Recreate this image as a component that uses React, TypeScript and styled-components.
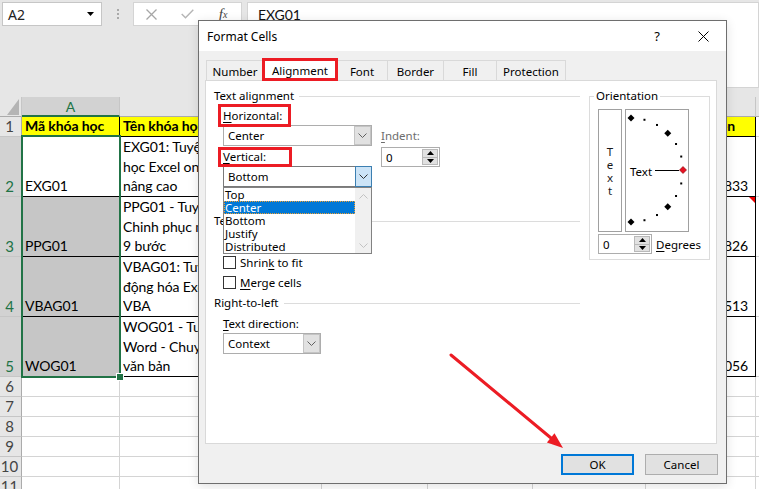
import React from "react";
import styled, { createGlobalStyle } from "styled-components";

const CELL = `"Lato", "Liberation Sans", sans-serif`;
const UI = `"Noto Sans", "Liberation Sans", sans-serif`;
const RED = "#ec1c24";

const Global = createGlobalStyle`
  html, body { margin: 0; padding: 0; background: #fff; }
  body { width: 759px; height: 489px; overflow: hidden; }
  *, *::before, *::after { box-sizing: border-box; }
  u { text-decoration: underline; text-underline-offset: 2px; }
`;

const Screen = styled.div`
  position: relative;
  width: 759px;
  height: 489px;
  overflow: hidden;
  display: flex;
  flex-direction: column;
  background: #e6e6e6;
`;

/* ---------- formula bar ---------- */
const FormulaArea = styled.div`
  height: 97px;
  flex: none;
  display: flex;
  align-items: flex-start;
  padding: 2px 0 0 2px;
`;
const NameBox = styled.div`
  width: 100px;
  height: 24px;
  flex: none;
  background: #fff;
  border: 1px solid #c6c6c6;
  display: flex;
  align-items: center;
  justify-content: space-between;
  padding: 0 7px 0 5px;
  font: 14px ${UI};
  color: #222;
`;
const Grip = styled.div`
  width: 31px;
  height: 24px;
  flex: none;
  display: flex;
  flex-direction: column;
  align-items: center;
  justify-content: center;
  gap: 2px;
  & > i {
    width: 2px;
    height: 2px;
    background: #a9a9a9;
  }
`;
const FuncBox = styled.div`
  width: 109px;
  height: 24px;
  flex: none;
  background: #fff;
  border: 1px solid #d4d4d4;
  display: flex;
  align-items: center;
`;
const FuncIcon = styled.div`
  width: 36px;
  height: 22px;
  display: flex;
  align-items: center;
  justify-content: center;
  font: italic 15px "Liberation Serif", serif;
  color: #444;
  & sub {
    font-size: 10px;
    vertical-align: -1px;
  }
`;
const FormulaBox = styled.div`
  flex: 1;
  height: 86px;
  margin-left: 5px;
  background: #fff;
  border: 1px solid #d4d4d4;
  padding: 2px 0 0 10px;
  font: 14px ${CELL};
  letter-spacing: -0.1px;
  line-height: 20px;
  color: #111;
`;

/* ---------- sheet ---------- */
const Sheet = styled.div`
  position: relative;
  flex: none;
  display: grid;
  grid-template-columns: 22px 98px 202px 106px 105px 113px 110px 100px;
  grid-template-rows: 20px 20px repeat(4, 60px) repeat(6, 20px);
  background: #fff;
`;
const Corner = styled.div`
  position: relative;
  background: #e6e6e6;
  border-right: 1px solid #c6c6c6;
  border-bottom: 1px solid #ababab;
  &::after {
    content: "";
    position: absolute;
    right: 2px;
    bottom: 1px;
    width: 12px;
    height: 16px;
    background: #b4b4b4;
    clip-path: polygon(100% 0, 100% 100%, 0 100%);
  }
`;
const ColHeader = styled.div<{ $sel?: boolean }>`
  background: ${(p) => (p.$sel ? "#d2d2d2" : "#e6e6e6")};
  border-right: 1px solid #c6c6c6;
  border-bottom: ${(p) => (p.$sel ? "2px solid #217346" : "1px solid #ababab")};
  color: ${(p) => (p.$sel ? "#217346" : "#444")};
  font: 14px ${CELL};
  display: flex;
  align-items: center;
  justify-content: center;
  padding-top: 1px;
`;
const RowHeader = styled.div<{ $sel?: boolean }>`
  background: ${(p) => (p.$sel ? "#d2d2d2" : "#e6e6e6")};
  border-right: 1px solid #ababab;
  border-bottom: 1px solid #c6c6c6;
  color: ${(p) => (p.$sel ? "#217346" : "#444")};
  font: 15px ${CELL};
  line-height: 19px;
  display: flex;
  align-items: flex-end;
  justify-content: center;
  padding-right: 2px;
`;
const Cell = styled.div<{
  $bg?: string;
  $bold?: boolean;
  $b?: boolean;
  $right?: boolean;
  $pr?: number;
  $comment?: boolean;
}>`
  position: relative;
  overflow: hidden;
  background: ${(p) => p.$bg ?? "#fff"};
  border-right: 1px solid ${(p) => (p.$b ? "#000" : "#d4d4d4")};
  border-bottom: 1px solid ${(p) => (p.$b ? "#000" : "#d4d4d4")};
  font: ${(p) => (p.$bold ? 700 : 400)} 14px ${CELL};
  letter-spacing: -0.1px;
  line-height: 20px;
  color: #000;
  display: flex;
  flex-direction: column;
  justify-content: flex-end;
  text-align: ${(p) => (p.$right ? "right" : "left")};
  padding: 0 ${(p) => p.$pr ?? 2}px 0 3px;
  white-space: nowrap;
  &::after {
    content: "";
    display: ${(p) => (p.$comment ? "block" : "none")};
    position: absolute;
    right: 0;
    top: 0;
    width: 6px;
    height: 6px;
    background: #e00;
    clip-path: polygon(0 0, 100% 0, 100% 100%);
  }
`;
const Line = styled.div`
  height: 20px;
  overflow: hidden;
`;
const Selection = styled.div`
  position: absolute;
  left: 21px;
  top: 38px;
  width: 100px;
  height: 243px;
  border: 2px solid #217346;
  pointer-events: none;
`;
const FillHandle = styled.div`
  position: absolute;
  right: -5px;
  bottom: -5px;
  width: 8px;
  height: 8px;
  background: #217346;
  border: 1px solid #fff;
`;

/* ---------- dialog ---------- */
const Dialog = styled.div`
  position: absolute;
  left: 198px;
  top: 20px;
  width: 529px;
  height: 464px;
  border: 1px solid #6e6e6e;
  background: #f0f0f0;
  display: flex;
  flex-direction: column;
  font: 11.5px ${UI};
  color: #000;
  box-shadow: 0 2px 10px rgba(0, 0, 0, 0.12);
`;
const TitleBar = styled.div`
  height: 30px;
  flex: none;
  background: #fff;
  display: flex;
  align-items: center;
  padding-left: 8px;
`;
const Title = styled.div`
  flex: 1;
  font-size: 12px;
`;
const TitleBtn = styled.div`
  width: 46px;
  height: 30px;
  display: flex;
  align-items: center;
  justify-content: center;
  font-size: 13px;
`;
const DialogBody = styled.div`
  flex: none;
  padding: 7px 9px 0 6px;
  display: flex;
  flex-direction: column;
`;
const TabStrip = styled.div`
  height: 22px;
  display: flex;
  align-items: flex-end;
  padding-left: 1px;
`;
const Tab = styled.div<{ $w: number; $active?: boolean }>`
  position: relative;
  z-index: ${(p) => (p.$active ? 2 : 0)};
  width: ${(p) => p.$w}px;
  height: ${(p) => (p.$active ? 23 : 20)}px;
  margin-bottom: ${(p) => (p.$active ? -1 : 0)}px;
  margin-right: -1px;
  background: ${(p) => (p.$active ? "#fff" : "#f0f0f0")};
  border: 1px solid #d9d9d9;
  border-bottom: none;
  display: flex;
  align-items: center;
  justify-content: center;
  padding-top: ${(p) => (p.$active ? 0 : 1)}px;
  white-space: nowrap;
`;
const Panel = styled.div`
  height: 364px;
  background: #fff;
  border: 1px solid #d9d9d9;
  display: flex;
  gap: 9px;
  padding: 7px 0 0 8px;
`;
const LeftCol = styled.div`
  width: 366px;
  display: flex;
  flex-direction: column;
`;
const SectionHead = styled.div<{ $mt?: number }>`
  height: 16px;
  line-height: 16px;
  margin-top: ${(p) => p.$mt ?? 0}px;
  display: flex;
  align-items: center;
  gap: 5px;
  white-space: nowrap;
  &::after {
    content: "";
    flex: 1;
    border-top: 1px solid #dcdcdc;
  }
`;
const Indented = styled.div`
  margin-left: 9px;
  display: flex;
  flex-direction: column;
`;
const AlignGrid = styled.div`
  display: flex;
  gap: 9px;
`;
const AlignFields = styled.div`
  width: 149px;
  display: flex;
  flex-direction: column;
`;
const IndentCol = styled.div`
  padding-top: 24px;
  display: flex;
  flex-direction: column;
  gap: 3px;
`;
const FieldLabel = styled.div<{ $h: number; $pt?: number; $mt?: number; $muted?: boolean }>`
  height: ${(p) => p.$h}px;
  padding-top: ${(p) => p.$pt ?? 0}px;
  margin-top: ${(p) => p.$mt ?? 0}px;
  line-height: 16px;
  color: ${(p) => (p.$muted ? "#6d6d6d" : "#000")};
  white-space: nowrap;
`;
const ComboWrap = styled.div`
  position: relative;
`;
const Combo = styled.div<{ $w: number; $mt?: number; $active?: boolean }>`
  width: ${(p) => p.$w}px;
  height: 21px;
  margin-top: ${(p) => p.$mt ?? 0}px;
  background: #fff;
  border: 1px solid ${(p) => (p.$active ? "#7a7a7a" : "#adadad")};
  display: flex;
`;
const ComboText = styled.div`
  flex: 1;
  padding-left: 4px;
  display: flex;
  align-items: center;
`;
const ComboBtn = styled.div<{ $active?: boolean }>`
  width: 17px;
  margin: ${(p) => (p.$active ? "-1px -1px -1px 0" : "0")};
  background: ${(p) => (p.$active ? "#cce4f7" : "#e1e1e1")};
  border: 1px solid ${(p) => (p.$active ? "#3c7fb1" : "#c4c4c4")};
  display: flex;
  align-items: center;
  justify-content: center;
`;
const ListBox = styled.div`
  position: absolute;
  left: 0;
  top: 100%;
  width: 149px;
  height: 67px;
  border: 1px solid #828282;
  background: #fff;
  display: flex;
  z-index: 5;
`;
const ListItems = styled.div`
  flex: 1;
  display: flex;
  flex-direction: column;
`;
const ListItem = styled.div<{ $sel?: boolean }>`
  height: 13px;
  line-height: 13px;
  padding-left: 1px;
  background: ${(p) => (p.$sel ? "#0078d7" : "transparent")};
  color: ${(p) => (p.$sel ? "#fff" : "#000")};
  outline: ${(p) => (p.$sel ? "1px dotted #f0a030" : "none")};
  outline-offset: -1px;
`;
const ScrollBar = styled.div`
  width: 16px;
  background: #f0f0f0;
  display: flex;
  flex-direction: column;
  align-items: center;
  justify-content: space-between;
  padding: 6px 0 5px;
`;
const CheckRow = styled.div<{ $mt?: number; $muted?: boolean }>`
  height: 20px;
  margin-top: ${(p) => p.$mt ?? 0}px;
  display: flex;
  align-items: center;
  gap: 4px;
  color: ${(p) => (p.$muted ? "#8a8a8a" : "#000")};
  white-space: nowrap;
`;
const CheckBox = styled.div`
  width: 13px;
  height: 13px;
  border: 1px solid #333;
  background: #fff;
`;
const Spinner = styled.div<{ $w: number }>`
  width: ${(p) => p.$w}px;
  height: 20px;
  border: 1px solid #adadad;
  background: #fff;
  display: flex;
`;
const SpinText = styled.div`
  flex: 1;
  padding-left: 4px;
  display: flex;
  align-items: center;
`;
const SpinBtns = styled.div`
  width: 16px;
  margin: 1px 1px 1px 0;
  display: flex;
  flex-direction: column;
  background: #e1e1e1;
  border: 1px solid #b9b9b9;
  & > div {
    flex: 1;
    display: flex;
    align-items: center;
    justify-content: center;
  }
  & > div + div {
    border-top: 1px solid #b9b9b9;
  }
`;

const OrientGroup = styled.fieldset`
  width: 121px;
  height: 172px;
  margin: 0;
  min-width: 0;
  padding: 5px 8px 0 8px;
  border: 1px solid #dcdcdc;
`;
const Legend = styled.legend`
  padding: 0 2px;
  margin-left: -4px;
  line-height: 16px;
  font-size: 11.5px;
`;
const OrientRow = styled.div`
  display: flex;
  gap: 3px;
`;
const VBox = styled.div`
  width: 24px;
  height: 123px;
  border: 1px solid #a0a0a0;
  display: flex;
  flex-direction: column;
  align-items: center;
  justify-content: center;
  line-height: 13px;
  color: #1a1a1a;
`;
const DialBox = styled.div`
  width: 64px;
  height: 123px;
  border: 1px solid #a0a0a0;
  & svg {
    display: block;
  }
`;
const DegreeRow = styled.div`
  margin-top: 2px;
  display: flex;
  align-items: center;
  gap: 4px;
`;

const Footer = styled.div`
  flex: 1;
  display: flex;
  justify-content: flex-end;
  align-items: flex-start;
  gap: 11px;
  padding: 10px 8px 0 0;
`;
const Button = styled.div<{ $default?: boolean }>`
  width: 73px;
  height: 21px;
  background: #e1e1e1;
  border: ${(p) => (p.$default ? "2px solid #0078d7" : "1px solid #adadad")};
  display: flex;
  align-items: center;
  justify-content: center;
`;

/* ---------- annotations ---------- */
const Annot = styled.div<{ $x: number; $y: number; $w: number; $h: number }>`
  position: absolute;
  left: ${(p) => p.$x}px;
  top: ${(p) => p.$y}px;
  width: ${(p) => p.$w}px;
  height: ${(p) => p.$h}px;
  border: 3px solid ${RED};
  pointer-events: none;
  z-index: 10;
`;
const ArrowLayer = styled.svg`
  position: absolute;
  left: 0;
  top: 0;
  width: 759px;
  height: 489px;
  pointer-events: none;
  z-index: 11;
`;

/* ---------- small drawings ---------- */
const Chevron = ({ up, color = "#606060" }: { up?: boolean; color?: string }) => (
  <svg width="9" height="5" viewBox="0 0 9 5">
    <polyline
      points={up ? "0.5,4.5 4.5,0.5 8.5,4.5" : "0.5,0.5 4.5,4.5 8.5,0.5"}
      fill="none"
      stroke={color}
      strokeWidth="1"
    />
  </svg>
);
const Tri = ({ up }: { up?: boolean }) => (
  <svg width="7" height="4" viewBox="0 0 7 4">
    <polygon points={up ? "0,4 3.5,0 7,4" : "0,0 7,0 3.5,4"} fill="#000" />
  </svg>
);

const ComboBox = ({
  w,
  value,
  active,
  mt,
}: {
  w: number;
  value: string;
  active?: boolean;
  mt?: number;
}) => (
  <Combo $w={w} $active={active} $mt={mt}>
    <ComboText>{value}</ComboText>
    <ComboBtn $active={active}>
      <Chevron color={active ? "#333" : "#606060"} />
    </ComboBtn>
  </Combo>
);

const SpinBox = ({ w }: { w: number }) => (
  <Spinner $w={w}>
    <SpinText>0</SpinText>
    <SpinBtns>
      <div>
        <Tri up />
      </div>
      <div>
        <Tri />
      </div>
    </SpinBtns>
  </Spinner>
);

const Dial = () => {
  const cx = 5;
  const cy = 60;
  const r = 52;
  const pts = [-90, -75, -60, -45, -30, -15, 0, 15, 30, 45, 60, 75, 90].map((a) => {
    const t = (a * Math.PI) / 180;
    return { a, x: cx + r * Math.cos(t), y: cy + r * Math.sin(t) };
  });
  return (
    <svg width="62" height="121" viewBox="0 0 62 121">
      {pts.map((p) =>
        p.a % 45 === 0 ? (
          <polygon
            key={p.a}
            points={`${p.x},${p.y - 3.5} ${p.x + 3.5},${p.y} ${p.x},${p.y + 3.5} ${p.x - 3.5},${p.y}`}
            fill={p.a === 0 ? "#e81123" : "#000"}
            stroke={p.a === 0 ? "#7a0000" : "none"}
            strokeWidth="0.6"
          />
        ) : (
          <rect key={p.a} x={p.x - 1} y={p.y - 1} width="2" height="2" fill="#000" />
        )
      )}
      <line x1="29" y1="60.5" x2="53" y2="60.5" stroke="#000" strokeWidth="1" />
      <text x="4" y="66" fontSize="11.5" fontFamily={UI.replace(/"/g, "")} fill="#000">
        Text
      </text>
    </svg>
  );
};

/* ---------- data ---------- */
const COLS = ["A", "B", "C", "D", "E", "F", "G"];
const HEAD = ["Mã khóa học", "Tên khóa học", "Giảng viên", "Thời lượng", "Học phí", "Số học viên"];
const ROWS = [
  {
    code: "EXG01",
    name: ["EXG01: Tuyệt đỉnh Excel - Trở thành bậc thầy", "học Excel online từ cơ bản đến", "nâng cao"],
    n: "12.833",
  },
  {
    code: "PPG01",
    name: ["PPG01 - Tuyệt đỉnh PowerPoint -", "Chinh phục mọi bài thuyết trình chỉ với", "9 bước"],
    n: "8.826",
  },
  {
    code: "VBAG01",
    name: ["VBAG01: Tuyệt đỉnh VBA - Viết code tự", "động hóa Excel với lập trình", "VBA"],
    n: "4.513",
  },
  {
    code: "WOG01",
    name: ["WOG01 - Tuyệt đỉnh Microsoft", "Word - Chuyên gia soạn thảo", "văn bản"],
    n: "6.056",
  },
];
const TABS = [
  { label: "Number", w: 58 },
  { label: "Alignment", w: 74 },
  { label: "Font", w: 52 },
  { label: "Border", w: 57 },
  { label: "Fill", w: 54 },
  { label: "Protection", w: 70 },
];

export default function App() {
  return (
    <>
      <Global />
      <Screen>
        <FormulaArea>
          <NameBox>
            <span>A2</span>
            <Tri />
          </NameBox>
          <Grip>
            <i />
            <i />
            <i />
          </Grip>
          <FuncBox>
            <FuncIcon>
              <svg width="11" height="11" viewBox="0 0 11 11">
                <path d="M0.5 0.5 L10.5 10.5 M10.5 0.5 L0.5 10.5" stroke="#a6a6a6" strokeWidth="1.3" />
              </svg>
            </FuncIcon>
            <FuncIcon>
              <svg width="13" height="10" viewBox="0 0 13 10">
                <polyline points="0.7,5 4.5,8.8 12.3,0.7" fill="none" stroke="#b5b5b5" strokeWidth="1.4" />
              </svg>
            </FuncIcon>
            <FuncIcon>
              f<sub>x</sub>
            </FuncIcon>
          </FuncBox>
          <FormulaBox>EXG01</FormulaBox>
        </FormulaArea>

        <Sheet>
          <Corner />
          {COLS.map((c, i) => (
            <ColHeader key={c} $sel={i === 0}>
              {c}
            </ColHeader>
          ))}
          <RowHeader>1</RowHeader>
          {HEAD.map((t, i) => (
            <Cell key={t} $bg="#ffff00" $bold $b $right={i === 5} $pr={i === 5 ? 20 : 2}>
              {t}
            </Cell>
          ))}
          <Cell />
          {ROWS.map((r, ri) => (
            <React.Fragment key={r.code}>
              <RowHeader $sel>{ri + 2}</RowHeader>
              <Cell $b $bg={ri === 0 ? "#fff" : "#c6c6c6"}>
                {r.code}
              </Cell>
              <Cell $b>
                {r.name.map((l) => (
                  <Line key={l}>{l}</Line>
                ))}
              </Cell>
              <Cell $b />
              <Cell $b />
              <Cell $b />
              <Cell $b $right $pr={7} $comment={ri === 1}>
                {r.n}
              </Cell>
              <Cell />
            </React.Fragment>
          ))}
          {[6, 7, 8, 9, 10, 11].map((n) => (
            <React.Fragment key={n}>
              <RowHeader>{n}</RowHeader>
              {COLS.map((c) => (
                <Cell key={c} />
              ))}
            </React.Fragment>
          ))}
          <Selection>
            <FillHandle />
          </Selection>
        </Sheet>

        <Dialog>
          <TitleBar>
            <Title>Format Cells</Title>
            <TitleBtn>?</TitleBtn>
            <TitleBtn>
              <svg width="11" height="11" viewBox="0 0 11 11">
                <path d="M0.5 0.5 L10.5 10.5 M10.5 0.5 L0.5 10.5" stroke="#000" strokeWidth="1" />
              </svg>
            </TitleBtn>
          </TitleBar>
          <DialogBody>
            <TabStrip>
              {TABS.map((t) => (
                <Tab key={t.label} $w={t.w} $active={t.label === "Alignment"}>
                  {t.label}
                </Tab>
              ))}
            </TabStrip>
            <Panel>
              <LeftCol>
                <SectionHead>Text alignment</SectionHead>
                <Indented>
                  <AlignGrid>
                    <AlignFields>
                      <FieldLabel $h={21} $pt={4}>
                        <u>H</u>orizontal:
                      </FieldLabel>
                      <ComboBox w={149} value="Center" />
                      <FieldLabel $h={20} $pt={3}>
                        <u>V</u>ertical:
                      </FieldLabel>
                      <ComboWrap>
                        <ComboBox w={149} value="Bottom" active />
                        <ListBox>
                          <ListItems>
                            <ListItem>Top</ListItem>
                            <ListItem $sel>Center</ListItem>
                            <ListItem>Bottom</ListItem>
                            <ListItem>Justify</ListItem>
                            <ListItem>Distributed</ListItem>
                          </ListItems>
                          <ScrollBar>
                            <Chevron up color="#c2c2c2" />
                            <Chevron color="#c2c2c2" />
                          </ScrollBar>
                        </ListBox>
                      </ComboWrap>
                    </AlignFields>
                    <IndentCol>
                      <FieldLabel $h={16} $muted>
                        <u>I</u>ndent:
                      </FieldLabel>
                      <SpinBox w={59} />
                    </IndentCol>
                  </AlignGrid>
                  <CheckRow $mt={3} $muted>
                    <CheckBox />
                    Justify distributed
                  </CheckRow>
                </Indented>
                <SectionHead $mt={3}>Text control</SectionHead>
                <Indented>
                  <CheckRow $mt={3}>
                    <CheckBox />
                    <span>
                      <u>W</u>rap text
                    </span>
                  </CheckRow>
                  <CheckRow>
                    <CheckBox />
                    <span>
                      Shrin<u>k</u> to fit
                    </span>
                  </CheckRow>
                  <CheckRow>
                    <CheckBox />
                    <span>
                      <u>M</u>erge cells
                    </span>
                  </CheckRow>
                </Indented>
                <SectionHead $mt={3}>Right-to-left</SectionHead>
                <Indented>
                  <FieldLabel $h={16} $mt={5}>
                    <u>T</u>ext direction:
                  </FieldLabel>
                  <ComboBox w={98} value="Context" mt={1} />
                </Indented>
              </LeftCol>
              <OrientGroup>
                <Legend>Orientation</Legend>
                <OrientRow>
                  <VBox>
                    <span>T</span>
                    <span>e</span>
                    <span>x</span>
                    <span>t</span>
                  </VBox>
                  <DialBox>
                    <Dial />
                  </DialBox>
                </OrientRow>
                <DegreeRow>
                  <SpinBox w={58} />
                  <span>
                    <u>D</u>egrees
                  </span>
                </DegreeRow>
              </OrientGroup>
            </Panel>
          </DialogBody>
          <Footer>
            <Button $default>OK</Button>
            <Button>Cancel</Button>
          </Footer>
        </Dialog>

        <Annot $x={262} $y={58} $w={76} $h={23} />
        <Annot $x={218} $y={104} $w={73} $h={23} />
        <Annot $x={218} $y={147} $w={74} $h={20} />

        <ArrowLayer viewBox="0 0 759 489">
          <line x1="451" y1="355" x2="551" y2="438" stroke={RED} strokeWidth="3" strokeLinecap="round" />
          <polygon points="563,448 546.9,442.4 554.5,433.2" fill={RED} />
        </ArrowLayer>
      </Screen>
    </>
  );
}
